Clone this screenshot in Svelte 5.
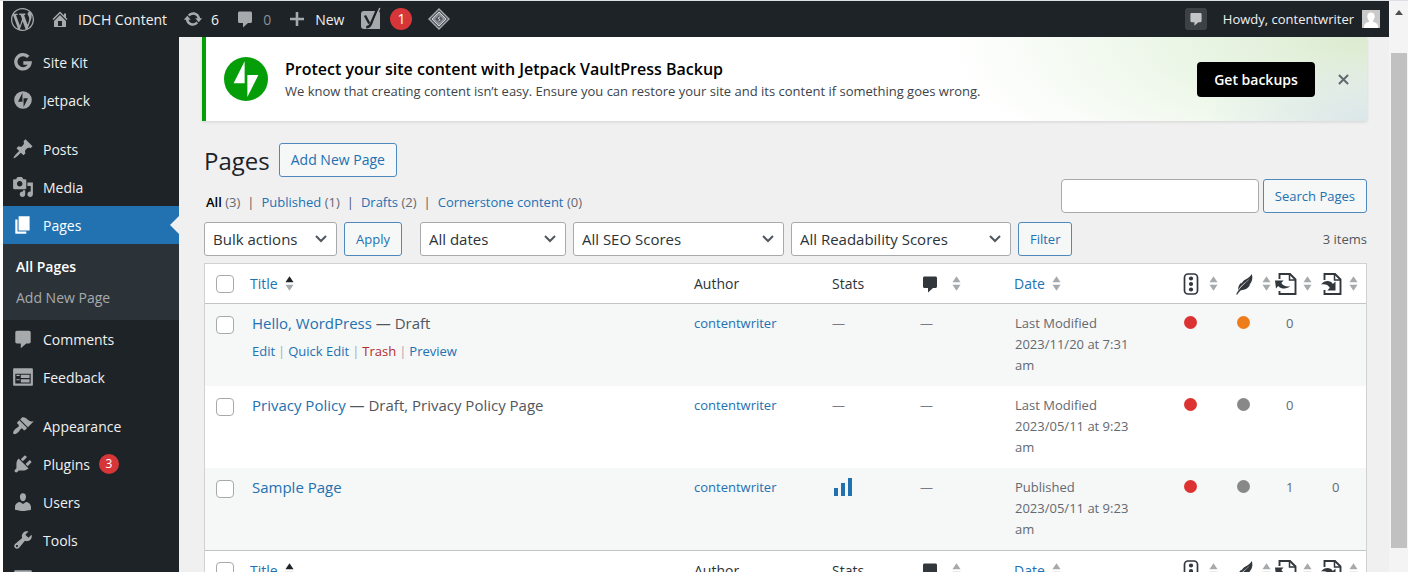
<script>
  const icons = {
    wordpress: 'M20 10c0-5.51-4.49-10-10-10C4.48 0 0 4.49 0 10c0 5.52 4.48 10 10 10 5.51 0 10-4.48 10-10zM7.78 15.37L4.37 6.22c.55-.02 1.17-.08 1.17-.08.5-.06.44-1.13-.06-1.11 0 0-1.45.11-2.37.11-.18 0-.37 0-.58-.01C4.12 2.69 6.87 1.11 10 1.11c2.33 0 4.45.87 6.05 2.34-.68-.11-1.65.39-1.65 1.58 0 .74.45 1.36.9 2.1.35.61.55 1.36.55 2.46 0 1.49-1.4 5-1.4 5l-3.03-8.37c.54-.02.82-.17.82-.17.5-.05.44-1.25-.06-1.22 0 0-1.44.12-2.38.12-.87 0-2.33-.12-2.33-.12-.5-.03-.56 1.2-.06 1.22l.92.08 1.26 3.41zM17.41 10c.24-.64.74-1.87.43-4.25.7 1.29 1.05 2.71 1.05 4.25 0 3.29-1.73 6.24-4.4 7.78.97-2.59 1.94-5.2 2.92-7.78zM6.1 18.09C3.12 16.65 1.11 13.53 1.11 10c0-1.3.23-2.48.72-3.59C3.25 10.3 4.67 14.2 6.1 18.09zm4.03-6.63l2.58 6.98c-.86.29-1.76.45-2.71.45-.79 0-1.57-.11-2.29-.33.81-2.38 1.62-4.74 2.42-7.1z',
    home: 'M16 8.5l1.53 1.53-1.06 1.06L10 4.6l-6.47 6.49-1.06-1.06L10 2.5l4 4v-2h2v4zm-6-2.46l6 5.99V18H4v-5.97zM12 17v-5H8v5h4z',
    update: 'M10.2 3.28c3.53 0 6.43 2.61 6.92 6h2.08l-3.5 4-3.5-4h2.32c-.45-1.97-2.21-3.45-4.32-3.45-1.45 0-2.73.71-3.54 1.78L4.95 5.66C6.23 4.2 8.11 3.28 10.2 3.28zm-.4 13.44c-3.52 0-6.43-2.61-6.92-6H.8l3.5-4c1.17 1.33 2.33 2.67 3.5 4H5.48c.45 1.97 2.21 3.45 4.32 3.45 1.45 0 2.73-.71 3.54-1.78l1.71 1.95c-1.28 1.46-3.15 2.38-5.25 2.38z',
    comment: 'M4.5 2.500h11c.8 0 1.500.7 1.500 1.500v8.500c0 .8-.7 1.500-1.500 1.500H13l-5 4.500v-4.500H4.500c-.8 0-1.500-.7-1.500-1.500V4c0-.8.7-1.500 1.500-1.500z',
    plus: 'M8.700 3h2.600v5.700H17v2.600h-5.700V17H8.700v-5.700H3V8.700h5.700z',
    jetpack: 'M10 2a8 8 0 1 0 0 16 8 8 0 0 0 0-16zM9.500 11.500h-4l4-8zM10.500 16.500v-8h4z',
    post: 'M10.44 3.02l1.82-1.82 6.36 6.35-1.83 1.82c-1.05-.68-2.48-.57-3.41.36l-.75.75c-.92.93-1.04 2.35-.35 3.41l-1.83 1.82-2.41-2.41-2.8 2.79c-.42.42-3.38 2.71-3.8 2.29s1.86-3.39 2.28-3.81l2.79-2.79L4.1 9.36l1.83-1.82c1.05.69 2.48.57 3.4-.36l.75-.75c.93-.92 1.05-2.35.36-3.41z',
    media: 'M13 11V4c0-.55-.45-1-1-1h-1.67L9 1H5L3.67 3H2c-.55 0-1 .45-1 1v7c0 .55.45 1 1 1h10c.55 0 1-.45 1-1zM7 4.5c1.38 0 2.5 1.12 2.5 2.5S8.38 9.5 7 9.5 4.5 8.38 4.5 7 5.62 4.5 7 4.5zM14 6h5v10.5c0 1.38-1.12 2.5-2.5 2.5S14 17.88 14 16.5s1.12-2.5 2.5-2.5c.17 0 .34.02.5.05V9h-3V6zm-4 8.05V13h2v3.5c0 1.38-1.12 2.5-2.5 2.5S7 17.88 7 16.5 8.12 14 9.5 14c.17 0 .34.02.5.05z',
    page: 'M6 15V2h10v13H6zm-1 1h8v2H3V5h2v11z',
    feedback: 'M2 2h16c.55 0 1 .45 1 1v14c0 .55-.45 1-1 1H2c-.55 0-1-.45-1-1V3c0-.55.45-1 1-1zm15 14V7H3v9h14zM4 8v1h3V8H4zm4 0v3h8V8H8zm-4 4v1h3v-1H4zm4 0v3h8v-3H8z',
    appearance: 'M14.48 11.06L7.41 3.99l1.5-1.5c.5-.56 2.3-.47 3.51.32 1.21.8 1.43 1.28 2.91 2.1 1.18.64 2.45 1.26 4.45.85zm-.71.71L6.7 4.7 4.93 6.47c-.39.39-.39 1.02 0 1.41l1.06 1.06c.39.39.39 1.03 0 1.42-.6.6-1.43 1.11-2.21 1.69-.35.26-.7.53-1.01.84C1.43 14.23.4 16.08 1.4 17.07c.99 1 2.84-.03 4.18-1.36.31-.31.58-.66.85-1.02.57-.78 1.08-1.61 1.69-2.21.39-.39 1.02-.39 1.41 0l1.06 1.06c.39.39 1.02.39 1.41 0z',
    plugins: 'M13.11 4.36L9.87 7.6 8 5.73l3.24-3.24c.35-.34 1.05-.2 1.56.32.52.51.66 1.21.31 1.55zm-8 1.77l.91-1.12 9.01 9.01-1.19.84c-.71.71-2.63 1.16-3.82 1.16H6.14L4.9 17.26c-.59.59-1.54.59-2.12 0-.59-.58-.59-1.53 0-2.12l1.24-1.24v-3.88c0-1.13.4-3.19 1.09-3.89zm7.26 3.97l3.24-3.24c.34-.35 1.04-.21 1.55.31.52.51.66 1.21.31 1.55l-3.24 3.25z',
    users: 'M10 9.25c-2.27 0-2.73-3.44-2.73-3.44C7 4.02 7.82 2 9.97 2c2.16 0 2.98 2.02 2.71 3.81 0 0-.41 3.44-2.68 3.44zm0 2.57L12.72 10c2.39 0 4.52 2.33 4.52 4.53v2.49s-3.65 1.13-7.24 1.13c-3.65 0-7.24-1.13-7.24-1.13v-2.49c0-2.25 1.94-4.48 4.47-4.48z',
    tools: 'M16.68 9.77c-1.34 1.34-3.3 1.67-4.95.99l-5.41 6.52c-.99.99-2.59.99-3.58 0s-.99-2.59 0-3.57l6.52-5.42c-.68-1.65-.35-3.61.99-4.95 1.28-1.28 3.12-1.62 4.72-1.06l-2.89 2.89 2.82 2.82 2.86-2.87c.53 1.58.18 3.39-1.08 4.65zM3.81 16.21c.4.39 1.04.39 1.43 0 .4-.4.4-1.04 0-1.43-.39-.4-1.03-.4-1.43 0-.39.39-.39 1.03 0 1.43z',
    settings: 'M18 16V4c0-.55-.45-1-1-1H3c-.55 0-1 .45-1 1v12c0 .55.45 1 1 1h14c.55 0 1-.45 1-1zM8 11h1c.55 0 1 .45 1 1s-.45 1-1 1H8v1.500c0 .28-.22.500-.500.500s-.500-.22-.500-.500V13H6c-.55 0-1-.45-1-1s.45-1 1-1h1V5.500c0-.28.22-.500.500-.500s.500.220.500.500V11z'
  };

  const menu = [
    { label: 'Site Kit', icon: 'sitekit' },
    { label: 'Jetpack', icon: 'jetpack' },
    { label: 'Posts', icon: 'post', gap: true },
    { label: 'Media', icon: 'media' },
    { label: 'Pages', icon: 'page', current: true, children: ['All Pages', 'Add New Page'] },
    { label: 'Comments', icon: 'comment' },
    { label: 'Feedback', icon: 'feedback' },
    { label: 'Appearance', icon: 'appearance', gap: true },
    { label: 'Plugins', icon: 'plugins', count: 3 },
    { label: 'Users', icon: 'users' },
    { label: 'Tools', icon: 'tools' },
    { label: 'Settings', icon: 'settings' }
  ];

  const views = [
    { label: 'All', count: 3, current: true },
    { label: 'Published', count: 1 },
    { label: 'Drafts', count: 2 },
    { label: 'Cornerstone content', count: 0 }
  ];

  const filters = [
    { label: 'All dates', size: 'dates' },
    { label: 'All SEO Scores', size: 'seo' },
    { label: 'All Readability Scores', size: 'readability' }
  ];

  const rows = [
    { title: 'Hello, WordPress', state: ' — Draft', actions: ['Edit', 'Quick Edit', 'Trash', 'Preview'], status: 'Last Modified', date: '2023/11/20 at 7:31 am', seo: 'red', read: 'orange', links: '0', linked: '' },
    { title: 'Privacy Policy', state: ' — Draft, Privacy Policy Page', status: 'Last Modified', date: '2023/05/11 at 9:23 am', seo: 'red', read: 'grey', links: '0', linked: '' },
    { title: 'Sample Page', state: '', stats: true, status: 'Published', date: '2023/05/11 at 9:23 am', seo: 'red', read: 'grey', links: '1', linked: '0' }
  ];
</script>

{#snippet icon(name)}
  <svg class="icon" viewBox="0 0 20 20" aria-hidden="true">
    {#if name === 'sitekit'}
      <path d="M14.800 5.400A6.500 6.500 0 1 0 16.400 10.900H10.300" fill="none" stroke="currentColor" stroke-width="3" />
    {:else}
      <path d={icons[name]} fill="currentColor" fill-rule="evenodd" />
    {/if}
  </svg>
{/snippet}

{#snippet sorter(up)}
  <svg class="sorter" viewBox="0 0 10 18" aria-hidden="true">
    <path d="M5 1l4.500 6.500h-9z" fill={up ? '#1d2327' : '#a7aaad'} />
    <path d="M5 17l4.500-6.500h-9z" fill="#a7aaad" />
  </svg>
{/snippet}

{#snippet headings(where)}
  <tr>
    <th class="check"><input type="checkbox" aria-label="Select all ({where})" /></th>
    <th class="title"><a href="#title"><span>Title</span>{@render sorter(true)}</a></th>
    <th class="author">Author</th>
    <th class="stats">Stats</th>
    <th class="comments">
      <a href="#comments" aria-label="Comments"><span class="dark">{@render icon('comment')}</span>{@render sorter(false)}</a>
    </th>
    <th class="date"><a href="#date"><span>Date</span>{@render sorter(false)}</a></th>
    <th class="score">
      <a href="#seo" aria-label="SEO score">
        <svg class="glyph" viewBox="0 0 22 24" aria-hidden="true">
          <rect x="4.500" y="2" width="13" height="20" rx="3.500" fill="none" stroke="#32373c" stroke-width="1.700" />
          <circle cx="11" cy="6.500" r="2.100" fill="#32373c" /><circle cx="11" cy="12" r="2.100" fill="#32373c" /><circle cx="11" cy="17.500" r="2.100" fill="#32373c" />
        </svg>{@render sorter(false)}
      </a>
    </th>
    <th class="score">
      <a href="#readability" aria-label="Readability score">
        <svg class="glyph" viewBox="0 0 22 24" aria-hidden="true">
          <path d="M18.800 2c.900 3 .800 6-.8 8.700-.500.800-1.200 1.300-2 1.700l1.300-.1c-1.200 2.400-3 4.400-5.600 5.300-1.500.500-3 .600-4.200.9-1.300 1.200-2.400 2.600-3.400 4.200l-1-.5c2.600-4.800 6-8.200 9.700-11.600 1.400-1.300 2.800-2.600 3.800-4.200-1.700 2-3.800 3.600-5.700 5.200-2.200 1.900-4.200 4-5.700 6.500-.300-3.200 1-5.800 3.200-7.600l.1 1.300c.7-1.900 2.200-3.200 4-4.200 2.400-1.300 4.900-2.800 6.300-5.600z" fill="#32373c" />
        </svg>{@render sorter(false)}
      </a>
    </th>
    <th class="links">
      <a href="#outgoing" aria-label="Outgoing links">
        <svg class="glyph" viewBox="0 0 22 24" aria-hidden="true">
          <path d="M4.500 7V2h10.500l5.500 5.500V22H4.500v-3" fill="none" stroke="#32373c" stroke-width="1.900" />
          <path d="M14.500 2v6h6" fill="none" stroke="#32373c" stroke-width="1.500" />
          <path d="M0 8.500h8.500L6.300 11c1.600 2.600 4.300 3.700 8.700 3.300-2.400 2.700-8.600 3.300-11.800-.400L1 16.500z" fill="#32373c" />
        </svg>{@render sorter(false)}
      </a>
    </th>
    <th class="links">
      <a href="#incoming" aria-label="Received links">
        <svg class="glyph" viewBox="0 0 22 24" aria-hidden="true">
          <path d="M3.500 8V2h10.500l5.500 5.500V22H3.500v-4" fill="none" stroke="#32373c" stroke-width="1.900" />
          <path d="M13.500 2v6h6" fill="none" stroke="#32373c" stroke-width="1.500" />
          <path d="M0 12.500c3.500-4.500 9.500-4.300 11.800-.6L14.500 9.500v9H6.300l2.500-2.800c-1.800-3-4.500-3.900-8.800-3.200z" fill="#32373c" />
        </svg>{@render sorter(false)}
      </a>
    </th>
  </tr>
{/snippet}

<div class="window">
  <div class="screen">
    <header class="bar">
      <a href="#about" class="large" aria-label="About WordPress">{@render icon('wordpress')}</a>
      <a href="#site">{@render icon('home')}<span>IDCH Content</span></a>
      <a href="#updates">{@render icon('update')}<span>6</span></a>
      <a href="#comments" class="faded">{@render icon('comment')}<span>0</span></a>
      <a href="#new">{@render icon('plus')}<span>New</span></a>
      <a href="#seo" aria-label="SEO, 1 notification">
        <svg class="logo" viewBox="0 0 22 24" aria-hidden="true">
          <path d="M4 4h13.500c1.700 0 2.500 1 2.500 2.500V22H4a3 3 0 0 1-3-3V7a3 3 0 0 1 3-3z" fill="#a7aaad" />
          <path d="M5 8.500l4.300 8M17.500 1.500l-6.600 15.500c-1 2.300-2.200 3.200-4.700 3.200" fill="none" stroke="#1d2327" stroke-width="2.400" />
          <path d="M19.800 1l-6.300 15" fill="none" stroke="#a7aaad" stroke-width="1.500" />
        </svg>
        <b>1</b>
      </a>
      <a href="#guard" aria-label="Site tools">
        <svg class="logo" viewBox="0 0 22 22" aria-hidden="true">
          <path d="M11 1l10 10-10 10L1 11z" fill="#50575e" stroke="#a7aaad" stroke-width="1.400" />
          <path d="M11 4l7 7-7 7-7-7z" fill="#8c8f94" stroke="#d0d2d5" />
          <path d="M11 7.200l3.800 3.800-3.800 3.800L7.200 11z" fill="#50575e" />
          <path d="M12 8.800l-2 1.400 2.200 1.600-2 1.400" fill="none" stroke="#d0d2d5" stroke-width="1" />
        </svg>
      </a>
      <a href="#notes" class="notes" aria-label="Notifications">{@render icon('comment')}</a>
      <a href="#profile" class="profile">
        <span>Howdy, contentwriter</span>
        <svg class="avatar" viewBox="0 0 18 18" aria-hidden="true">
          <rect width="18" height="18" fill="#c9c9c9" />
          <path d="M9 2.500c2.300 0 3.700 1.600 3.700 3.800 0 1.900-.7 3.300-1.700 4.200v1.200c1.500.6 4.500 1.300 5 4.300v2H2v-2c.5-3 3.500-3.700 5-4.300v-1.200c-1-.9-1.700-2.300-1.700-4.200C5.300 4.100 6.700 2.500 9 2.500z" fill="#fff" />
        </svg>
      </a>
    </header>

    <div class="body">
      <nav class="menu" aria-label="Main menu">
        <ul>
          {#each menu as item}
            <li class:gap={item.gap} class:current={item.current}>
              <a class="item" href="#{item.label}">
                {@render icon(item.icon)}<span>{item.label}</span>
                {#if item.count}<b>{item.count}</b>{/if}
              </a>
              {#if item.children}
                <ul class="sub">
                  {#each item.children as child, i}
                    <li><a href="#{child}" class:active={i === 0}>{child}</a></li>
                  {/each}
                </ul>
              {/if}
            </li>
          {/each}
        </ul>
      </nav>

      <main>
        <section class="banner">
          <svg class="mark" viewBox="0 0 32 32" aria-hidden="true">
            <circle cx="16" cy="16" r="16" fill="#069e08" />
            <path d="M15 19H7l8-16zM17 29V13h8z" fill="#fff" />
          </svg>
          <div class="message">
            <h2>Protect your site content with Jetpack VaultPress Backup</h2>
            <p>We know that creating content isn’t easy. Ensure you can restore your site and its content if something goes wrong.</p>
          </div>
          <button class="primary" type="button">Get backups</button>
          <button class="close" type="button" aria-label="Dismiss">
            <svg viewBox="0 0 12 12" aria-hidden="true"><path d="M1 1l10 10M11 1L1 11" stroke="#646970" stroke-width="2.200" /></svg>
          </button>
        </section>

        <div class="content">
          <div class="heading">
            <h1>Pages</h1>
            <a class="button" href="#new-page">Add New Page</a>
          </div>

          <div class="overview">
            <ul class="views">
              {#each views as view}
                <li><a href="#{view.label}" class:current={view.current}>{view.label}</a> <span>({view.count})</span></li>
              {/each}
            </ul>
            <form class="search">
              <input type="search" aria-label="Search Pages" />
              <button class="button" type="button">Search Pages</button>
            </form>
          </div>

          <div class="toolbar">
            <div class="group">
              <select class="bulk" aria-label="Bulk actions"><option>Bulk actions</option></select>
              <button class="button" type="button">Apply</button>
            </div>
            <div class="group">
              {#each filters as filter}
                <select class={filter.size} aria-label={filter.label}><option>{filter.label}</option></select>
              {/each}
              <button class="button" type="button">Filter</button>
            </div>
            <span class="total">3 items</span>
          </div>

          <table>
            <thead>{@render headings('top')}</thead>
            <tbody>
              {#each rows as row}
                <tr>
                  <td class="check"><input type="checkbox" aria-label="Select {row.title}" /></td>
                  <td class="name">
                    <strong><a href="#{row.title}">{row.title}</a>{row.state}</strong>
                    {#if row.actions}
                      <ul class="actions">
                        {#each row.actions as action}
                          <li><a href="#{action}" class:trash={action === 'Trash'}>{action}</a></li>
                        {/each}
                      </ul>
                    {/if}
                  </td>
                  <td><a href="#author">contentwriter</a></td>
                  <td class="none">
                    {#if row.stats}
                      <a href="#stats" aria-label="View stats">
                        <svg class="bars" viewBox="0 0 18 18" aria-hidden="true"><path d="M0 10h4v8H0zM7 5h4v13H7zM14 0h4v18h-4z" fill="#2271b1" /></svg>
                      </a>
                    {:else}—{/if}
                  </td>
                  <td class="none">—</td>
                  <td class="when">{row.status}<br />{row.date}</td>
                  <td class="mid"><i class={row.seo}></i></td>
                  <td class="mid"><i class={row.read}></i></td>
                  <td class="number">{row.links}</td>
                  <td class="number">{row.linked}</td>
                </tr>
              {/each}
            </tbody>
            <tfoot>{@render headings('bottom')}</tfoot>
          </table>
        </div>
      </main>
    </div>
  </div>

  <div class="scrollbar" aria-hidden="true">
    <svg viewBox="0 0 8 5"><path d="M0 5l4-5 4 5z" fill="#505050" /></svg>
    <div class="thumb"></div>
  </div>
</div>

<style>
  :global(body) {
    background: #fff;
  }
  * {
    box-sizing: border-box;
  }
  .window {
    display: flex;
    height: 100vh;
    overflow: hidden;
    padding-left: 3px;
    border-top: 1px solid #dcdfe3;
    font: 13px/21px 'Open Sans', 'Noto Sans', sans-serif;
    color: #50575e;
  }
  .screen {
    flex: 1;
    min-width: 0;
    display: flex;
    flex-direction: column;
  }
  a {
    color: #2271b1;
    text-decoration: none;
  }
  ul {
    list-style: none;
    margin: 0;
    padding: 0;
  }
  h1,
  h2,
  p {
    margin: 0;
  }
  button,
  input,
  select {
    font-family: inherit;
  }
  .icon {
    width: 20px;
    height: 20px;
    flex: none;
    display: block;
  }

  /* Admin bar */
  .bar {
    display: flex;
    align-items: center;
    height: 36px;
    flex: none;
    padding: 0 9px 0 8px;
    gap: 16px;
    background: #1d2327;
    font-size: 14px;
  }
  .bar a {
    display: flex;
    align-items: center;
    gap: 8px;
    color: #f0f0f1;
  }
  .bar .icon {
    color: #a7aaad;
  }
  .bar .large .icon {
    width: 23px;
    height: 23px;
  }
  .bar .faded span {
    color: #8c8f94;
  }
  .bar b {
    width: 22px;
    height: 22px;
    border-radius: 11px;
    background: #d63638;
    color: #fff;
    font-weight: 400;
    text-align: center;
  }
  .logo {
    width: 22px;
    height: 24px;
  }
  .notes {
    margin-left: auto;
    padding: 3px;
    border-radius: 3px;
    background: #3c4146;
  }
  .bar .notes .icon {
    width: 16px;
    height: 16px;
    color: #c3c4c7;
  }
  .profile {
    font-size: 13px;
  }
  .avatar {
    width: 18px;
    height: 18px;
  }

  /* Side menu */
  .body {
    flex: 1;
    min-height: 0;
    display: flex;
  }
  .menu {
    width: 176px;
    flex: none;
    padding-top: 6px;
    background: #1d2327;
    font-size: 14px;
    overflow: hidden;
  }
  .menu .gap {
    margin-top: 11px;
  }
  .item {
    position: relative;
    display: flex;
    align-items: center;
    gap: 9px;
    height: 38px;
    padding-left: 9px;
    color: #f0f0f1;
  }
  .item .icon {
    width: 22px;
    height: 22px;
    color: #a7aaad;
  }
  .item b {
    width: 20px;
    height: 20px;
    border-radius: 10px;
    background: #d63638;
    color: #fff;
    font-size: 12px;
    line-height: 20px;
    font-weight: 400;
    text-align: center;
  }
  .current .item {
    background: #2271b1;
    color: #fff;
  }
  .current .item .icon {
    color: #fff;
  }
  .current .item::after {
    content: '';
    position: absolute;
    right: 0;
    top: 10px;
    border: 9px solid transparent;
    border-left: 0;
    border-right-color: #f0f0f1;
  }
  .sub {
    padding: 7px 0;
    background: #2c3338;
  }
  .sub a {
    display: block;
    height: 31px;
    padding-left: 13px;
    line-height: 31px;
    color: #a7aaad;
  }
  .sub .active {
    color: #fff;
    font-weight: 600;
  }

  /* Main area */
  main {
    flex: 1;
    min-width: 0;
    padding: 0 22px 0 23px;
    background: #f0f0f1;
    overflow: hidden;
  }
  .banner {
    display: flex;
    align-items: center;
    height: 84px;
    padding: 0 16px 0 18px;
    border-left: 4px solid #069e08;
    background:
      radial-gradient(ellipse 160px 70px at 100% 100%, #dbe6ea 0%, transparent 100%),
      radial-gradient(ellipse 420px 160px at 100% 0%, #dcead0 0%, #e9f5e4 40%, transparent 100%),
      #fff;
    box-shadow: 0 1px 3px rgba(0, 0, 0, 0.12);
  }
  .mark {
    width: 44px;
    height: 44px;
    flex: none;
  }
  .message {
    flex: 1;
    padding-left: 17px;
  }
  .banner h2 {
    color: #000;
    font-size: 16px;
    line-height: 24px;
    font-weight: 600;
  }
  .banner p {
    color: #3c434a;
  }
  .primary {
    width: 118px;
    height: 35px;
    border: 0;
    border-radius: 4px;
    background: #000;
    color: #fff;
    font-size: 14px;
    font-weight: 600;
  }
  .close {
    display: flex;
    justify-content: center;
    width: 16px;
    margin-left: 20px;
    padding: 0;
    border: 0;
    background: none;
  }
  .close svg {
    width: 11px;
    height: 11px;
  }
  .content {
    padding: 22px 0 0 2px;
  }
  .heading {
    display: flex;
    align-items: center;
    gap: 9px;
    height: 34px;
  }
  h1 {
    color: #1d2327;
    font-size: 24px;
    font-weight: 400;
  }
  .button {
    display: block;
    height: 34px;
    padding: 0 11px;
    border: 1px solid #4f88bd;
    border-radius: 3px;
    background: #f6f7f7;
    color: #2271b1;
    font-size: 13px;
    line-height: 32px;
    white-space: nowrap;
  }
  .heading .button {
    font-size: 14px;
  }
  .overview {
    display: flex;
    justify-content: space-between;
    margin: 2px 0 9px;
  }
  .views {
    display: flex;
    padding: 13px 0 0 2px;
  }
  .views li + li::before {
    content: '|';
    padding: 0 7px;
  }
  .views span {
    color: #646970;
  }
  .views .current {
    color: #000;
    font-weight: 600;
  }
  .search {
    display: flex;
    gap: 4px;
  }
  .search input {
    width: 198px;
    height: 34px;
    border: 1px solid #a7aaad;
    border-radius: 4px;
    background: #fff;
  }
  .toolbar {
    display: flex;
    align-items: center;
    gap: 18px;
    margin-bottom: 7px;
  }
  .group {
    display: flex;
    gap: 7px;
  }
  select {
    height: 34px;
    padding: 0 28px 0 8px;
    border: 1px solid #a7aaad;
    border-radius: 3px;
    appearance: none;
    background: #fff url("data:image/svg+xml,%3Csvg xmlns='http://www.w3.org/2000/svg' viewBox='0 0 12 8'%3E%3Cpath d='M1 1l5 5 5-5' fill='none' stroke='%2350575e' stroke-width='2'/%3E%3C/svg%3E") no-repeat right 9px center / 12px 8px;
    color: #2c3338;
    font-size: 15px;
  }
  .bulk {
    width: 133px;
  }
  .dates {
    width: 146px;
  }
  .seo {
    width: 211px;
  }
  .readability {
    width: 220px;
  }
  .total {
    margin-left: auto;
  }

  /* List table */
  table {
    width: 100%;
    table-layout: fixed;
    border: 1px solid #d0d1d4;
    border-collapse: separate;
    border-spacing: 0;
    background: #fff;
  }
  th {
    height: 40px;
    padding: 0 0 0 12px;
    border-bottom: 1px solid #c3c4c7;
    color: #2c3338;
    font-size: 14px;
    font-weight: 400;
    text-align: left;
  }
  tfoot th {
    border-top: 1px solid #c3c4c7;
    border-bottom: 0;
  }
  th a {
    display: flex;
    align-items: center;
    gap: 7px;
  }
  th.title {
    padding-left: 7px;
  }
  th.check {
    width: 38px;
  }
  th.author {
    width: 138px;
  }
  th.stats {
    width: 88px;
  }
  th.comments {
    width: 94px;
  }
  th.date {
    width: 166px;
  }
  th.score {
    width: 53px;
  }
  th.links {
    width: 46px;
    padding-left: 1px;
  }
  .comments a {
    gap: 12px;
  }
  .links a {
    gap: 6px;
  }
  .dark {
    color: #32373c;
  }
  .sorter {
    width: 9px;
    height: 17px;
    flex: none;
  }
  .glyph {
    width: 22px;
    height: 24px;
    flex: none;
  }
  td {
    height: 82px;
    padding: 9px 0 9px 12px;
    vertical-align: top;
  }
  tbody tr:nth-child(odd) td {
    background: #f6f7f7;
  }
  .check,
  th.check {
    padding: 12px 0 0 11px;
  }
  th.check {
    padding-top: 0;
  }
  .check input {
    display: block;
    width: 18px;
    height: 18px;
    margin: 0;
    border: 1px solid #a7aaad;
    border-radius: 4px;
    appearance: none;
    background: #fff;
  }
  .name {
    padding-left: 9px;
  }
  .name strong {
    font-size: 15px;
    font-weight: 500;
  }
  .actions {
    display: flex;
    padding-top: 6px;
  }
  .actions li + li::before {
    content: '|';
    padding: 0 3px;
    color: #a7aaad;
  }
  .actions .trash {
    color: #b32d2e;
  }
  .none {
    color: #787c82;
  }
  .bars {
    display: block;
    width: 18px;
    height: 18px;
    margin: 1px 0 0 2px;
  }
  .when {
    padding-right: 28px;
    padding-left: 13px;
    color: #646970;
  }
  .mid {
    padding-left: 16px;
  }
  .mid i {
    display: block;
    width: 13px;
    height: 13px;
    border-radius: 7px;
    margin-top: 3px;
  }
  .red {
    background: #dc3232;
  }
  .orange {
    background: #ee7c1b;
  }
  .grey {
    background: #888;
  }
  .number {
    color: #646970;
  }

  /* Window scroll bar */
  .scrollbar {
    display: flex;
    flex-direction: column;
    align-items: center;
    width: 19px;
    padding: 9px 1px 24px 2px;
    background: #f4f4f5;
  }
  .scrollbar svg {
    width: 8px;
    height: 5px;
    margin-bottom: 38px;
    flex: none;
  }
  .thumb {
    flex: 1;
    width: 100%;
    background: #c1c1c1;
  }
</style>
